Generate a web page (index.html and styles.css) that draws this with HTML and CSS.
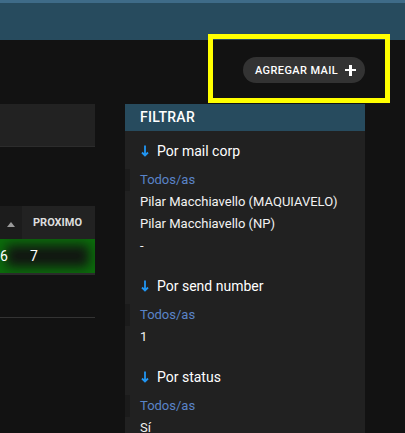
FILE: index.html
```html
<!DOCTYPE html>
<html lang="es">
<head>
<meta charset="utf-8">
<title>Mails</title>
<link rel="stylesheet" href="styles.css">
</head>
<body>
<header class="topbar"></header>
<div class="page">
  <div class="toolbar">
    <button class="add-btn">AGREGAR MAIL <span class="plus"></span></button>
  </div>
  <div class="content">
    <div class="left">
      <div class="card"></div>
      <div class="table">
        <div class="thead">
          <div class="th th-sort"><span class="tri"></span></div>
          <div class="th th-label">PROXIMO</div>
        </div>
        <div class="trow">
          <div class="td td-a">6</div>
          <div class="td td-b">7</div>
        </div>
      </div>
      <div class="divider"></div>
    </div>
    <aside class="filter">
      <div class="filter-head">FILTRAR</div>
      <div class="filter-body">
        <section class="fsec">
          <h3 class="ftitle"><svg class="arrow" width="8" height="12" viewBox="0 0 8 12"><path d="M4 0.5V10.5M1 7.5L4 10.5L7 7.5" fill="none" stroke="#2196f3" stroke-width="1.8"/></svg>Por mail corp</h3>
          <ul class="flist">
            <li class="fitem active">Todos/as</li>
            <li class="fitem">Pilar Macchiavello (MAQUIAVELO)</li>
            <li class="fitem">Pilar Macchiavello (NP)</li>
            <li class="fitem">-</li>
          </ul>
        </section>
        <section class="fsec">
          <h3 class="ftitle"><svg class="arrow" width="8" height="12" viewBox="0 0 8 12"><path d="M4 0.5V10.5M1 7.5L4 10.5L7 7.5" fill="none" stroke="#2196f3" stroke-width="1.8"/></svg>Por send number</h3>
          <ul class="flist">
            <li class="fitem active">Todos/as</li>
            <li class="fitem">1</li>
          </ul>
        </section>
        <section class="fsec">
          <h3 class="ftitle"><svg class="arrow" width="8" height="12" viewBox="0 0 8 12"><path d="M4 0.5V10.5M1 7.5L4 10.5L7 7.5" fill="none" stroke="#2196f3" stroke-width="1.8"/></svg>Por status</h3>
          <ul class="flist">
            <li class="fitem active">Todos/as</li>
            <li class="fitem">Sí</li>
          </ul>
        </section>
      </div>
    </aside>
  </div>
</div>
<div class="highlight"></div>
</body>
</html>
```
FILE: styles.css
```css
* { box-sizing: border-box; }
html, body { margin: 0; padding: 0; }
body {
  background: #121212;
  font-family: Roboto, "Liberation Sans", sans-serif;
  color: #fff;
  overflow: hidden;
  height: 433px;
}
.topbar {
  height: 40px;
  background: #274b5e;
  border-top: 3px solid #3e6b88;
}
.page { width: 365px; }
.toolbar {
  height: 64px;
  display: flex;
  justify-content: flex-end;
  align-items: flex-start;
  padding-top: 17px;
}
.add-btn {
  height: 26px;
  width: 122px;
  border: none;
  border-radius: 13px;
  background: #333333;
  color: #fff;
  font-family: Roboto, "Liberation Sans", sans-serif;
  font-size: 11px;
  font-weight: 500;
  letter-spacing: 0.4px;
  display: flex;
  align-items: center;
  padding: 0 0 0 12px;
  gap: 7px;
}
.plus {
  position: relative;
  width: 11px;
  height: 11px;
  display: inline-block;
}
.plus::before, .plus::after {
  content: "";
  position: absolute;
  background: #fff;
}
.plus::before { left: 0; top: 4.25px; width: 11px; height: 2.5px; }
.plus::after { left: 4.25px; top: 0; width: 2.5px; height: 11px; }
.content {
  display: flex;
  gap: 30px;
}
.left { width: 95px; flex: none; }
.card {
  height: 43px;
  background: #222;
  border-bottom: 1px solid #2c2c2c;
}
.table { margin-top: 59px; }
.thead { display: flex; height: 33px; }
.th { height: 33px; }
.th-sort {
  width: 22px;
  background: #1c1c1c;
  display: flex;
  align-items: center;
  justify-content: center;
  padding-top: 4px;
}
.tri {
  width: 0; height: 0;
  border-left: 4px solid transparent;
  border-right: 4px solid transparent;
  border-bottom: 5px solid #9a9a9a;
}
.th-label {
  flex: 1;
  background: #222;
  font-size: 11px;
  font-weight: 700;
  color: #ddd;
  padding-left: 11px;
  line-height: 33px;
}
.trow {
  display: flex;
  height: 36px;
  background: #121512;
  box-shadow: inset 0 0 12px 6px #0b6e0b;
  border-bottom: 2px solid #2a2a2a;
  font-size: 14px;
  line-height: 34px;
}
.td-a { width: 30px; padding-left: 0; }
.td-b { flex: 1; }
.divider {
  margin-top: 42px;
  height: 1px;
  background: #333;
}
.filter {
  width: 240px;
  flex: none;
  background: #212121;
  height: 329px;
}
.filter-head {
  height: 27px;
  background: #274b5e;
  font-size: 14px;
  font-weight: 500;
  padding-left: 15px;
  line-height: 27px;
  letter-spacing: 0.3px;
}
.filter-body { padding-top: 10px; }
.fsec { margin-bottom: 19px; }
.ftitle {
  margin: 0 0 8px;
  padding-left: 16px;
  font-size: 14px;
  font-weight: 400;
  line-height: 20px;
  display: flex;
  align-items: center;
  gap: 8px;
}
.arrow { flex: none; }
.flist { list-style: none; margin: 0; padding: 0; }
.fitem {
  font-size: 13px;
  font-weight: 400;
  line-height: 22px;
  padding-left: 15px;
  color: #f2f2f2;
}
.fitem.active {
  color: #5a84c8;
  border-left: 5px solid #1b1b1b;
  padding-left: 10px;
}
.highlight {
  position: absolute;
  left: 208px;
  top: 34px;
  width: 182px;
  height: 69px;
  border: 5px solid #ffff00;
  pointer-events: none;
}
```
